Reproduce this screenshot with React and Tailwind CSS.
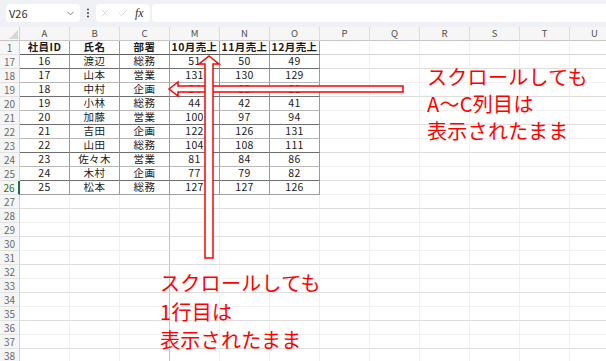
import React from 'react';
import { ChevronDown, EllipsisVertical, X, Check } from 'lucide-react';

const COLS = ['A', 'B', 'C', 'M', 'N', 'O', 'P', 'Q', 'R', 'S', 'T', 'U'];
const HEADER = ['社員ID', '氏名', '部署', '10月売上', '11月売上', '12月売上'];

const DATA = [
  [17, 16, '渡辺', '総務', 51, 50, 49],
  [18, 17, '山本', '営業', 131, 130, 129],
  [19, 18, '中村', '企画', 84, 83, 81],
  [20, 19, '小林', '総務', 44, 42, 41],
  [21, 20, '加藤', '営業', 100, 97, 94],
  [22, 21, '吉田', '企画', 122, 126, 131],
  [23, 22, '山田', '総務', 104, 108, 111],
  [24, 23, '佐々木', '営業', 81, 84, 86],
  [25, 24, '木村', '企画', 77, 79, 82],
  [26, 25, '松本', '総務', 127, 127, 126],
];

const EMPTY = [27, 28, 29, 30, 31, 32, 33, 34, 35, 36, 37, 38];

const font = { fontFamily: '"Noto Sans CJK JP", "Noto Sans", sans-serif' };

// one grid cell; table cells get the darker (scaled) black borders
const cellClass = (col, kind, num) => {
  const inTable = kind !== 'empty' && col < 6;
  let right;
  if (inTable) right = 'border-r-[#9c9c9c]';
  else if (col === 2) right = 'border-r-[#c4c4c4]';
  else right = 'border-r-[#f0f0f0]';

  let bottom;
  if (kind === 'head') bottom = inTable ? 'border-b-[#5c5c5c]' : 'border-b-[#d4d4d4]';
  else if (kind === 'data' && col < 6) {
    if (num === 26) bottom = 'border-b-[#a0a0a0]';
    else bottom = num % 2 === 1 ? 'border-b-[#6e6e6e]' : 'border-b-[#b8b8b8]';
  } else bottom = num % 2 === 1 ? 'border-b-[#dedede]' : 'border-b-[#f1f1f1]';

  return `w-[50px] h-[14px] shrink-0 border-r border-b ${right} ${bottom} flex items-center justify-center leading-none text-[10.5px] tracking-[0.4px] text-[#1a1a1a]`;
};

const Row = ({ num, cells = [], kind }) => {
  const selected = num === 26;
  return (
    <div className="flex">
      <div
        className={`w-[20px] h-[14px] shrink-0 bg-[#f6f6f6] border-b border-b-[#e2e2e2] flex items-center justify-center text-[10px] leading-none ${
          selected ? 'border-r-2 border-r-[#1e7145] text-[#1e7145] bg-[#ececec]' : 'border-r border-r-[#d2d2d2] text-[#6a6a6a]'
        }`}
      >
        {num}
      </div>
      {COLS.map((c, i) => (
        <div key={c} className={`${cellClass(i, kind, num)} ${kind === 'head' ? 'font-bold' : ''}`}>
          {cells[i]}
        </div>
      ))}
    </div>
  );
};

export default function App() {
  return (
    <div className="relative w-[606px] h-[361px] overflow-hidden bg-white" style={font}>
      {/* formula bar */}
      <div className="h-[27px] bg-[#eff1f4] flex items-start pt-[4px] pl-[6px]">
        <div className="w-[74px] h-[18px] bg-white rounded-[4px] flex items-center justify-between pl-[3px] pr-[4px]">
          <span className="text-[11px] text-[#333] leading-none">V26</span>
          <ChevronDown size={11} strokeWidth={1.6} className="text-[#555]" />
        </div>
        <div className="w-[16px] h-[18px] flex items-center justify-center">
          <EllipsisVertical size={12} strokeWidth={2.4} className="text-[#555]" />
        </div>
        <div className="w-[54px] h-[18px] bg-white rounded-[4px] flex items-center pl-[3px] gap-[6px]">
          <X size={12} strokeWidth={1.2} className="text-[#c4c4c4]" />
          <Check size={12} strokeWidth={1.2} className="text-[#c4c4c4]" />
          <span className="text-[12px] italic leading-none text-[#333]" style={{ fontFamily: '"Liberation Serif", serif' }}>
            fx
          </span>
        </div>
        <div className="ml-[2px] flex-1 h-[18px] bg-white rounded-l-[4px]" />
      </div>

      {/* column headers */}
      <div className="flex">
        <div className="w-[20px] h-[14px] shrink-0 bg-[#f6f6f6] border-r border-b border-r-[#d2d2d2] border-b-[#c6c6c6] flex items-end justify-end p-[1px]">
          <svg width="9" height="9" viewBox="0 0 9 9">
            <polygon points="9,0 9,9 0,9" fill="#d6d6d6" />
          </svg>
        </div>
        {COLS.map((c) => (
          <div
            key={c}
            className="w-[50px] h-[14px] shrink-0 bg-[#f6f6f6] border-r border-b border-r-[#dcdcdc] border-b-[#c6c6c6] flex items-center justify-center text-[9.5px] leading-none text-[#505050]"
          >
            {c}
          </div>
        ))}
      </div>

      <Row num={1} cells={HEADER} kind="head" />
      {DATA.map(([n, ...cells]) => (
        <Row key={n} num={n} cells={cells} kind="data" />
      ))}
      {EMPTY.map((n) => (
        <Row key={n} num={n} kind="empty" />
      ))}

      {/* arrows over the sheet */}
      <svg className="absolute left-0 top-0" width="606" height="361" viewBox="0 0 606 361">
        <polygon
          points="169,89 178,82 178,86 403,86 403,92 178,92 178,96"
          fill="white"
          stroke="#ff0000"
          strokeWidth="1.5"
        />
        <polygon
          points="209,56 219,64 213,64 213,258 205,258 205,64 199,64"
          fill="white"
          stroke="#ff0000"
          strokeWidth="1.5"
        />
      </svg>

      <div className="absolute left-[427px] top-[63px] text-[20px] leading-[27px] tracking-[0.3px] text-[#ff0000]">
        <div>スクロールしても</div>
        <div>A～C列目は</div>
        <div>表示されたまま</div>
      </div>

      <div className="absolute left-[160px] top-[269px] text-[20px] leading-[28.5px] tracking-[0.3px] text-[#ff0000]">
        <div>スクロールしても</div>
        <div>1行目は</div>
        <div>表示されたまま</div>
      </div>
    </div>
  );
}
